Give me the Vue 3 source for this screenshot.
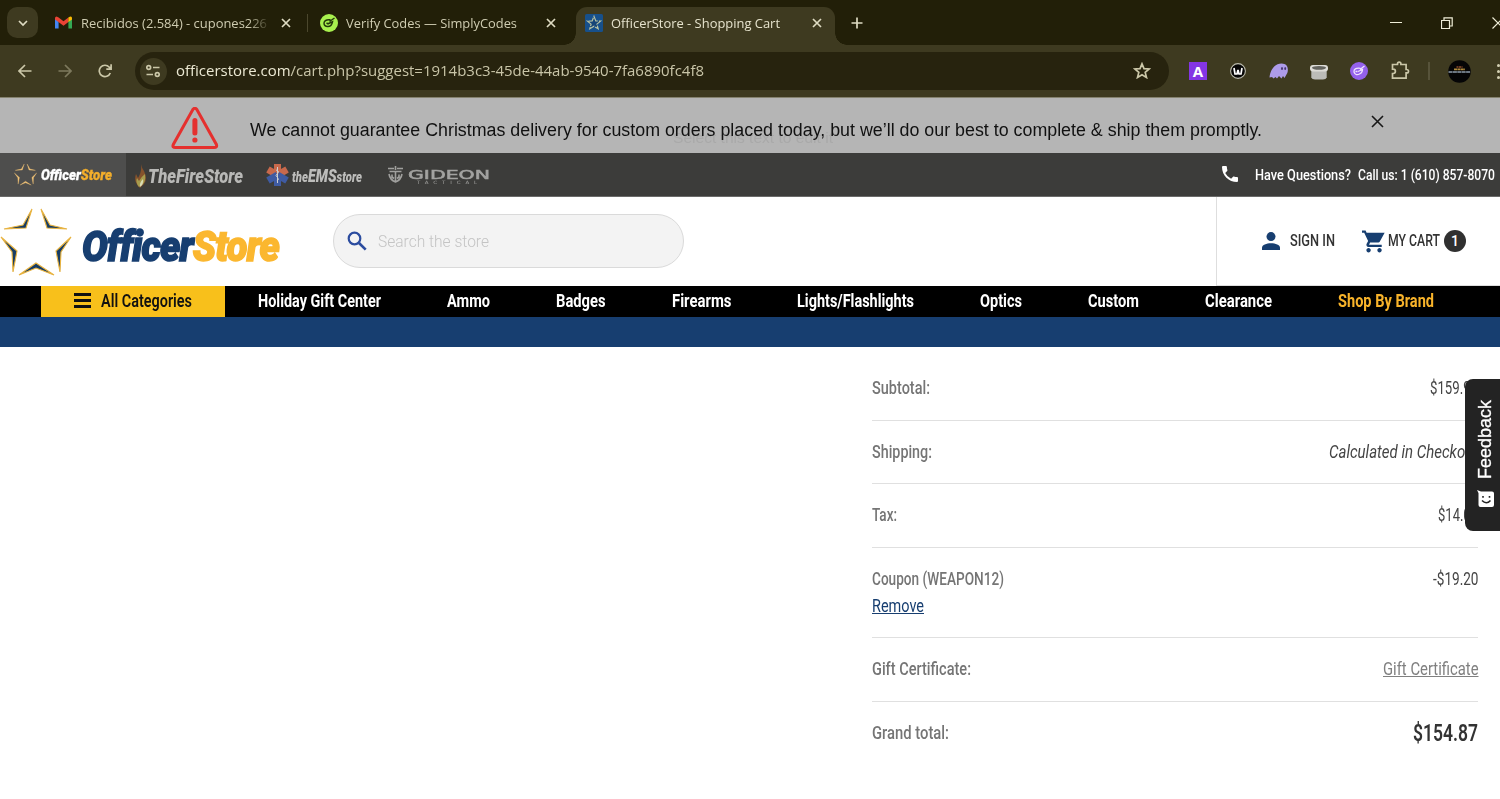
<template>
  <div class="window">
    <div class="tabstrip">
      <div class="tab-search">
        <svg width="12" height="12" viewBox="0 0 12 12"><path d="M2 4l4 4 4-4" class="line bright" /></svg>
      </div>
      <div class="tab tab-mail">
        <svg class="fav" width="17" height="14" viewBox="0 0 17 14">
          <path d="M0 2v10.500h3.600V5z" fill="#4285f4" />
          <path d="M17 2v10.500h-3.600V5z" fill="#34a853" />
          <path d="M0 2.200Q0 .6 1.600.6L3.600 1.500 8.500 5.300 13.400 1.500V6L8.500 9.800 0 3.500z" fill="#ea4335" />
          <path d="M13.400 1.500Q17-.8 17 2.300V3.500L13.400 6z" fill="#fbbc04" />
        </svg>
        <span class="tab-title fade" v-fit="186">Recibidos (2.584) - cupones226</span>
        <svg class="x" width="10" height="10" viewBox="0 0 10 10"><path d="M1 1l8 8M9 1l-8 8" class="line bright" /></svg>
      </div>
      <div class="tab-divider"></div>
      <div class="tab tab-codes">
        <svg class="fav" width="18" height="18" viewBox="0 0 18 18">
          <circle cx="9" cy="9" r="9" fill="#a8f04e" />
          <path d="M10.500 5.800Q4.500 5.200 4 9q0 3.600 4 3.400 3.600 0 4.500-4.600L8 9.800l-1.500-1M9.500 7.500l5-3.500" fill="none" stroke="#24380b" stroke-width="1.500" />
        </svg>
        <span class="tab-title" v-fit="171">Verify Codes — SimplyCodes</span>
        <svg class="x" width="10" height="10" viewBox="0 0 10 10"><path d="M1 1l8 8M9 1l-8 8" class="line bright" /></svg>
      </div>
      <div class="tab tab-active">
        <svg class="fav" width="18" height="18" viewBox="0 0 18 18">
          <rect width="18" height="18" rx="1.500" fill="#17508b" />
          <path d="M9 2.300l1.800 4.600 4.800.2-3.700 3 1.300 4.700L9 12.200l-4.200 2.600 1.300-4.700-3.700-3 4.800-.2z" fill="#164578" stroke="#b9c3a3" stroke-width="1.200" stroke-dasharray="7 1" />
        </svg>
        <span class="tab-title" v-fit="169">OfficerStore - Shopping Cart</span>
        <svg class="x" width="10" height="10" viewBox="0 0 10 10"><path d="M1 1l8 8M9 1l-8 8" class="line bright" /></svg>
      </div>
      <svg class="new-tab" width="12" height="12" viewBox="0 0 12 12"><path d="M6 .5v11M.5 6h11" class="line bright" /></svg>
      <div class="controls">
        <svg width="12" height="12" viewBox="0 0 12 12"><path d="M0 5.500h12" stroke="#f0eed8" /></svg>
        <svg width="12" height="12" viewBox="0 0 12 12"><path d="M.5 3.500h8v8h-8zM3 3V.8h8.200V9H9" fill="none" stroke="#f0eed8" stroke-width="1.200" /></svg>
        <svg width="12" height="12" viewBox="0 0 12 12"><path d="M.5.5l11 11M11.500.5l-11 11" fill="none" stroke="#f0eed8" stroke-width="1.200" /></svg>
      </div>
    </div>

    <div class="toolbar">
      <svg class="back" width="14" height="14" viewBox="0 0 14 14"><path d="M13.500 7H1.500M7 1L1 7l6 6" class="line" /></svg>
      <svg class="forward" width="14" height="14" viewBox="0 0 14 14"><path d="M.5 7h12M7 1l6 6-6 6" class="line" /></svg>
      <svg class="reload" width="14" height="14" viewBox="0 0 14 14"><path d="M12.300 9A5.700 5.700 0 1 1 11.300 3.200L13 5M13.100.3V5.200H8.300" class="line" /></svg>
      <div class="omnibox">
        <div class="site-info">
          <svg width="14" height="14" viewBox="0 0 14 14">
            <circle cx="2.700" cy="3.500" r="1.900" class="line" /><path d="M7 3.500h6.500M.5 10.500H7" class="line" /><circle cx="11.300" cy="10.500" r="1.900" class="line" />
          </svg>
        </div>
        <span class="url" v-fit="528"><b>officerstore.com</b>/cart.php?suggest=1914b3c3-45de-44ab-9540-7fa6890fc4f8</span>
        <svg class="bookmark" width="18" height="17" viewBox="0 0 18 17"><path d="M9 1.800l2 4.800 5.200.4-4 3.400 1.300 5.100L9 12.800l-4.500 2.700 1.300-5.100-4-3.400L7 6.600z" class="line" /></svg>
      </div>
      <div class="extensions">
        <div class="ext-a">A</div>
        <div class="ext-w">
          <svg width="16" height="16" viewBox="0 0 16 16"><circle cx="8" cy="8" r="7.400" fill="#050505" stroke="#bcbcae" stroke-width="1.100" /><path d="M4 5l1 6h2l1-4 1 4h2l1-6" fill="none" stroke="#fff" stroke-width="1.700" /></svg>
        </div>
        <svg width="20" height="16" viewBox="0 0 20 16"><path d="M.5 14.500C1 7 6 .5 12.500.5c6 0 7.300 5 5.800 9.500L15.500 15l-1.500-2-1.500 2.500L10 13l-2 2.500L6.500 14l-2 1.500L3 14z" fill="#ad9be9" /><ellipse cx="13" cy="5.500" rx="1" ry="1.500" fill="#46366c" /><ellipse cx="16.200" cy="5.500" rx=".9" ry="1.500" fill="#46366c" /></svg>
        <svg class="cup" width="18" height="16" viewBox="0 0 18 16"><path d="M1.300 6v7.500q.7 2 3.700 2h8q3 0 3.700-2V6z" fill="#bcbcb8" /><rect y="1" width="18" height="6.500" rx="3" fill="#dddcd7" /><ellipse cx="9" cy="3.800" rx="7" ry="1.900" fill="#64645f" /></svg>
        <svg width="18" height="18" viewBox="0 0 18 18"><circle cx="9" cy="9" r="9" fill="#9461ec" /><path d="M10.500 6.300Q3.500 5.500 4 10q1.500 4 5.500 2 3-1.500 3-4.500L8 9.500M10 7.500L14.500 4M5.500 9.500h2" fill="none" stroke="#efe3ff" stroke-width="1.300" /></svg>
        <svg class="puzzle" width="19" height="19" viewBox="0 0 19 19"><path d="M1.500 3.500h5V2.800a1.700 1.700 0 0 1 3.400 0v.7h5.200v5h.7a1.700 1.700 0 0 1 0 3.400h-.7v5.200H1.500v-4.600h.7a2.200 2.200 0 0 0 0-4.400h-.7z" class="line" /></svg>
        <div class="ext-divider"></div>
        <svg class="profile" width="23" height="23" viewBox="0 0 23 23"><circle cx="11.500" cy="11.500" r="11.300" fill="#050506" /><path d="M8.500 7h6" stroke="#8d4b2c" stroke-width="1.300" stroke-dasharray="2 .5" /><path d="M6 9.300h11" stroke="#b08a3c" stroke-width="1.700" stroke-dasharray="3 .4" /><path d="M.5 11.900h22" stroke="#8e9dad" stroke-width="1.500" stroke-dasharray="4 .4" /></svg>
        <div class="dots"><i></i><i></i><i></i></div>
      </div>
    </div>

    <div class="notice">
      <svg class="warning" width="48" height="43" viewBox="0 0 48 43">
        <path d="M21.700 2.700Q23.900-.3 26 2.700L45.400 37.500Q46.500 40.500 43 40.500H4.500Q1 40.500 2.300 37.500z" fill="none" stroke="#e5302e" stroke-width="3" />
        <path d="M23.900 13.500v12.500" stroke="#e5302e" stroke-width="5" stroke-linecap="round" /><circle cx="23.900" cy="33" r="2.600" fill="#e5302e" />
      </svg>
      <span class="placeholder-copy" v-fit="160">Select this text to edit it</span>
      <span class="notice-text" v-fit="1012">We cannot guarantee Christmas delivery for custom orders placed today, but we’ll do our best to complete &amp; ship them promptly.</span>
      <svg class="notice-close" width="13" height="13" viewBox="0 0 13 13"><path d="M1 1l11 11M12 1L1 12" fill="none" stroke="#171717" stroke-width="1.600" /></svg>
    </div>

    <div class="stores">
      <div class="store store-officer">
        <svg width="23" height="23" viewBox="0 0 72 68"><path v-for="d in starPoints" :key="d" :d="d" fill="#f2c477" stroke="#f2c477" /></svg>
        <span v-fit="71">Officer<em>Store</em></span>
      </div>
      <div class="store store-fire">
        <svg width="12" height="24" viewBox="0 0 12 24"><path d="M6 0q1 5 3 7 4 8 0 13l-4 4Q-2 18 1 10l2 4Q7 8 6 0" fill="#85522c" /><path d="M4 23Q0 18 2 14l2 3q2-4 6-7 1 8-3 11z" fill="#a79c4d" /><path d="M5 23q-1-4 3-8 1 5-3 8" fill="#d9dcb4" /></svg>
        <span v-fit="95">TheFireStore</span>
      </div>
      <div class="store store-ems">
        <svg width="23" height="24" viewBox="0 0 23 24">
          <g fill="#c8694c">
            <rect x="8" y="1" width="7" height="11" />
            <rect x="8" y="1" width="7" height="11" transform="rotate(-60 11.500 12)" />
            <rect x="8" y="1" width="7" height="11" transform="rotate(60 11.500 12)" />
          </g>
          <g fill="#3f5ba2">
            <rect x="8" y="12" width="7" height="11" />
            <rect x="8" y="12" width="7" height="11" transform="rotate(-60 11.500 12)" />
            <rect x="8" y="12" width="7" height="11" transform="rotate(60 11.500 12)" />
          </g>
          <path d="M11.500 4v16M10 7q4 1 1.500 3.500-3 2 0 4 2 2-.5 3.500" fill="none" stroke="#cfcfcf" />
        </svg>
        <span v-fit="70"><small>the</small>EMS<small>store</small></span>
      </div>
      <div class="store-gideon">
        <svg width="17" height="17" viewBox="0 0 17 17"><path d="M1 2.500h6M10 2.500h6M2.500 5.500h12M2 8q1 6 6.500 8Q14 14 15 8M8.500 6v9M5 8.500v2.500l2 1.500M12 8.500v2.500l-2 1.500M8.500 0v4" fill="none" stroke="#a0a09e" stroke-width="1.600" /></svg>
        <div class="gideon-name"><span v-fit="82">GIDEON</span><small v-fit="65">TACTICAL</small></div>
      </div>
      <div class="phone">
        <svg width="16" height="16" viewBox="3 3 18 18"><path d="M6.620 10.790a15.150 15.150 0 0 0 6.590 6.590l2.200-2.200c.27-.27.67-.36 1.020-.24 1.120.37 2.330.57 3.570.57.55 0 1 .45 1 1V20c0 .55-.45 1-1 1C10.610 21 3 13.390 3 4c0-.55.45-1 1-1h3.500c.55 0 1 .45 1 1 0 1.250.2 2.450.57 3.570.11.35.03.74-.25 1.020z" fill="#fff" /></svg>
        <span v-fit="96">Have Questions?</span>
        <span v-fit="137">Call us: 1 (610) 857-8070</span>
      </div>
    </div>

    <header class="header">
      <div class="logo">
        <svg width="72" height="68" viewBox="0 0 72 68">
          <path v-for="d in starPoints" :key="d" :d="d" fill="#173c64" stroke="#eab43f" stroke-width="1.100" />
        </svg>
        <span v-fit="197">Officer<em>Store</em></span>
      </div>
      <div class="search">
        <svg width="20" height="20" viewBox="0 0 20 20"><circle cx="7.500" cy="7.500" r="5.800" fill="none" stroke="#2b4c9f" stroke-width="2.200" /><path d="M12 12l6.700 6.700" stroke="#2b4c9f" stroke-width="2.600" /></svg>
        <span v-fit="111">Search the store</span>
      </div>
      <div class="account">
        <svg class="user" width="18" height="18" viewBox="0 0 18 18"><circle cx="9" cy="4.600" r="4.500" fill="#173e70" /><path d="M0 18v-2.200C0 9.600 18 9.600 18 15.800V18z" fill="#173e70" /></svg>
        <span class="sign-in" v-fit="45">SIGN IN</span>
        <svg class="cart" width="23" height="23" viewBox="1 1.500 21 21"><path d="M7 18c-1.100 0-1.990.9-1.990 2S5.900 22 7 22s2-.9 2-2-.9-2-2-2zM1 2v2h2l3.600 7.590-1.350 2.450C4.520 15.370 5.480 17 7 17h12v-2H7.420l.98-2h7.150c.75 0 1.410-.41 1.750-1.030L21.700 4H5.210l-.94-2zm16 16c-1.100 0-1.990.9-1.990 2s.89 2 1.990 2 2-.9 2-2-.9-2-2-2z" fill="#173e70" /></svg>
        <span class="my-cart" v-fit="52">MY CART</span>
        <span class="count">1</span>
      </div>
    </header>

    <nav class="nav">
      <div class="all">
        <div class="burger"><i></i><i></i><i></i></div>
        <span v-fit="91">All Categories</span>
      </div>
      <span
        v-for="item in menu"
        :key="item.label"
        v-fit="item.width"
        :class="{ brand: item.brand }"
      >{{ item.label }}</span>
    </nav>
    <div class="blue-band"></div>

    <main class="totals">
      <div v-for="row in rows" :key="row.label" class="row" :class="row.kind">
        <div class="label">
          <span v-fit="row.labelWidth">{{ row.label }}</span>
          <a v-if="row.kind === 'coupon'" v-fit="52">Remove</a>
        </div>
        <span class="value" v-fit="row.valueWidth">{{ row.value }}</span>
      </div>
    </main>

    <div class="feedback">
      <span>Feedback</span>
      <svg width="17" height="17" viewBox="0 0 17 17"><path d="M0 0l4 1.500h11q2 0 2 2V15q0 2-2 2H3.500q-2 0-2-2V3z" fill="#fff" /><path d="M6 6v1.800M12.500 6v1.800M5 10.500q4.300 4.500 8.500 0" fill="none" stroke="#232323" stroke-width="1.600" /></svg>
    </div>
  </div>
</template>

<script setup>
// squeezes or stretches a piece of text to a set width in px
function fit(el, binding) {
  el.style.transform = "none";
  el.style.marginRight = "0";
  const natural = el.getBoundingClientRect().width;
  el.style.transform = "scaleX(" + binding.value / natural + ")";
  el.style.marginRight = binding.value - natural + "px";
}
const vFit = { mounted: fit };

const starPoints = [
  "M32 1L26 20 4 21 23 17z",
  "M41 1L47 20 67 21 50 17z",
  "M1 29L17 43 13 64 12 44z",
  "M71 29L56 43 60 64 61 44z",
  "M36 55L54 67 36 60 19 67z",
];

const menu = [
  { label: "Holiday Gift Center", width: 123 },
  { label: "Ammo", width: 43 },
  { label: "Badges", width: 49.5 },
  { label: "Firearms", width: 59.5 },
  { label: "Lights/Flashlights", width: 117 },
  { label: "Optics", width: 42 },
  { label: "Custom", width: 51 },
  { label: "Clearance", width: 67 },
  { label: "Shop By Brand", width: 96, brand: true },
];

const rows = [
  { label: "Subtotal:", labelWidth: 58, value: "$159.99", valueWidth: 48 },
  { label: "Shipping:", labelWidth: 60, value: "Calculated in Checkout", valueWidth: 149, kind: "shipping" },
  { label: "Tax:", labelWidth: 25, value: "$14.08", valueWidth: 40 },
  { label: "Coupon (WEAPON12)", labelWidth: 132, value: "-$19.20", valueWidth: 45.5, kind: "coupon" },
  { label: "Gift Certificate:", labelWidth: 99, value: "Gift Certificate", valueWidth: 95.5, kind: "gift" },
  { label: "Grand total:", labelWidth: 77, value: "$154.87", valueWidth: 65, kind: "grand" },
];
</script>

<style>
body {
  margin: 0;
  background: #fff;
}
</style>

<style scoped>
.window {
  position: relative;
  width: 1500px;
  height: 799px;
  overflow: hidden;
  background: #fff;
  font-family: Roboto, sans-serif;
}
svg {
  display: block;
  flex: none;
}
span,
small,
a {
  display: inline-block;
  flex: none;
  white-space: nowrap;
  transform-origin: left center;
}
.line {
  fill: none;
  stroke: #cbc7a8;
  stroke-width: 1.7;
}
.line.bright {
  stroke: #dedbc2;
}

/* browser tabs */
.tabstrip {
  display: flex;
  height: 45px;
  background: #221f08;
  font-family: "Open Sans", "Noto Sans", sans-serif;
}
.tab-search {
  display: flex;
  align-items: center;
  justify-content: center;
  width: 31px;
  height: 31px;
  margin: 7px 0 0 7px;
  border-radius: 10px;
  background: #3e3a20;
}
.tab {
  display: flex;
  align-items: center;
  box-sizing: border-box;
  height: 46px;
  flex: none;
}
.tab-title {
  font-size: 13.5px;
  color: #cfccb1;
}
.fade {
  mask-image: linear-gradient(to right, #000 90%, transparent 102%);
}
.tab-mail {
  width: 269px;
  padding-left: 17px;
}
.tab-mail .fav {
  margin-right: 9px;
}
.tab-mail .x {
  margin-left: 14px;
}
.tab-divider {
  width: 1px;
  height: 18px;
  margin-top: 14px;
  background: #4b472d;
}
.tab-codes {
  width: 268px;
  padding-left: 12px;
}
.tab-codes .fav,
.tab-active .fav {
  margin-right: 8px;
}
.tab-codes .x {
  margin-left: 29px;
}
.tab-active {
  position: relative;
  width: 259px;
  height: 38px;
  margin-top: 7px;
  padding: 0 0 7px 9px;
  border-radius: 11px 11px 0 0;
  background: #3e3a20;
}
.tab-active::before,
.tab-active::after {
  content: "";
  position: absolute;
  bottom: 0;
  width: 12px;
  height: 12px;
}
.tab-active::before {
  left: -12px;
  background: radial-gradient(circle at 0 0, transparent 11.5px, #3e3a20 12px);
}
.tab-active::after {
  right: -12px;
  background: radial-gradient(circle at 100% 0, transparent 11.5px, #3e3a20 12px);
}
.tab-active .tab-title {
  color: #e6e3cd;
}
.tab-active .x {
  margin-left: 32px;
}
.new-tab {
  margin: 17px 0 0 16px;
}
.controls {
  display: flex;
  gap: 39px;
  margin: 17px -4px 0 auto;
}

/* address bar */
.toolbar {
  display: flex;
  align-items: center;
  box-sizing: border-box;
  height: 53px;
  border-bottom: 1px solid #85826f;
  background: #3e3a20;
  font-family: "Open Sans", "Noto Sans", sans-serif;
}
.back {
  margin-left: 18px;
}
.forward {
  margin-left: 26px;
  opacity: 0.45;
}
.reload {
  margin-left: 26px;
}
.omnibox {
  display: flex;
  align-items: center;
  flex: none;
  width: 1034px;
  height: 38px;
  margin-left: 23px;
  border-radius: 19px;
  background: #27230e;
}
.site-info {
  display: flex;
  align-items: center;
  justify-content: center;
  width: 27px;
  height: 27px;
  margin: 0 9px 0 5px;
  border-radius: 50%;
  background: #3e3a20;
}
.site-info svg {
  margin-right: 1px;
}
.url {
  margin-bottom: 2px;
  font-size: 15px;
  color: #c9c5a8;
}
.url b {
  font-weight: 400;
  color: #ebe8d2;
}
.bookmark {
  margin-left: auto;
  margin-right: 18px;
  margin-bottom: 1px;
}
.extensions {
  display: flex;
  align-items: center;
  flex: none;
  margin-left: 20px;
}
.ext-a {
  width: 18px;
  height: 18px;
  background: #8435e4;
  color: #fff;
  font-weight: 700;
  font-size: 15px;
  line-height: 18px;
  text-align: center;
}
.ext-w {
  margin: 0 23px 0 23px;
}
.cup {
  margin: 2px 22px 0 21px;
}
.puzzle {
  margin: -2px 0 0 23px;
}
.ext-divider {
  width: 2px;
  height: 18px;
  margin: 0 18px 0 18px;
  background: #57533a;
}
.dots {
  display: flex;
  flex-direction: column;
  gap: 3px;
  margin-left: 26px;
}
.dots i {
  width: 3px;
  height: 3px;
  border-radius: 50%;
  background: #d5d1b4;
}

/* delivery notice */
.notice {
  position: relative;
  display: flex;
  height: 55px;
  background: #b5b5b5;
  font-family: "Liberation Sans", Arial, sans-serif;
}
.warning {
  margin: 9px 0 0 171px;
}
.notice-text {
  position: relative;
  margin: 22px 0 0 31px;
  font-size: 18px;
  line-height: 21px;
  color: #111;
}
.placeholder-copy {
  position: absolute;
  left: 673px;
  top: 31px;
  font-size: 15px;
  color: #a9a9a9;
}
.notice-close {
  margin: 17px 0 0 109px;
}

/* sister stores */
.stores {
  display: flex;
  height: 44px;
  background: linear-gradient(#3c3c3a 43px, #6a6a69 43px);
  color: #fff;
}
.store {
  display: flex;
  align-items: center;
  box-sizing: border-box;
  height: 43px;
  font-family: Roboto, sans-serif;
  font-weight: 900;
  font-style: italic;
}
.store-officer {
  width: 126px;
  padding-left: 14px;
  background: #4e4e4d;
  font-size: 15.5px;
}
.store-officer span {
  margin-left: 4px;
  -webkit-text-stroke: 0.3px;
}
.store-officer em {
  color: #f3ae2b;
}
.store-fire {
  padding: 3px 0 0 9px;
  color: #b8b8b6;
  font-size: 20px;
}
.store-fire span {
  margin-left: 1px;
}
.store-ems {
  padding: 1px 0 0 23px;
  color: #bdbdbb;
  font-size: 19px;
}
.store-ems span {
  margin-left: 3px;
}
.store-ems small {
  font-size: 15px;
}
.store-gideon {
  display: flex;
  align-items: center;
  height: 42px;
  margin-left: 25px;
  color: #a3a3a1;
}
.gideon-name {
  display: flex;
  flex-direction: column;
  align-items: flex-start;
  margin: 6px 0 0 4px;
  width: 84px;
}
.gideon-name span {
  font: 400 11.5px/11px "DejaVu Sans", sans-serif;
  -webkit-text-stroke: 0.5px;
}
.gideon-name small {
  margin-left: 9px;
  font: 400 4.5px/4px "DejaVu Sans", sans-serif;
  letter-spacing: 4px;
}
.phone {
  display: flex;
  align-items: center;
  height: 43px;
  margin-left: auto;
  margin-right: 5px;
  font-size: 15px;
  font-weight: 500;
}
.phone svg {
  margin: 0 17px 2px 0;
}
.phone span + span {
  margin-left: 7px;
}

/* store header */
.header {
  display: flex;
  height: 89px;
}
.logo {
  display: flex;
  width: 333px;
}
.logo svg {
  margin-top: 11px;
}
.logo span {
  margin: 22px 0 0 10px;
  font: italic 900 43px/54px Roboto, sans-serif;
  letter-spacing: -1px;
  color: #173e70;
  -webkit-text-stroke: 1.5px;
}
.logo em {
  color: #fbb72f;
}
.search {
  display: flex;
  align-items: center;
  box-sizing: border-box;
  width: 351px;
  height: 54px;
  margin-top: 17px;
  padding: 0 0 1px 13px;
  border: 1px solid #dadada;
  border-radius: 27px;
  background: #f3f3f3;
  font-size: 17px;
  font-weight: 300;
  color: #c4c4c4;
}
.search span {
  margin-left: 11px;
}
.account {
  display: flex;
  align-items: center;
  box-sizing: border-box;
  width: 284px;
  margin-left: auto;
  padding-left: 45px;
  border-left: 1px solid #dedede;
  border-bottom: 1px solid #dedede;
  font-size: 17px;
  font-weight: 500;
  color: #333;
}
.sign-in {
  margin: -2px 0 0 10px;
}
.cart {
  margin-left: 27px;
}
.my-cart {
  margin: -2px 0 0 3px;
}
.count {
  width: 22px;
  height: 22px;
  margin-left: 4px;
  border-radius: 50%;
  background: #303030;
  color: #fff;
  font-size: 14px;
  line-height: 22px;
  text-align: center;
}

/* category menu */
.nav {
  display: flex;
  align-items: center;
  gap: 66px;
  height: 31px;
  padding-left: 41px;
  background: #000;
  color: #fff;
  font-size: 17.5px;
  font-weight: 700;
}
.nav span {
  margin-bottom: 2px;
}
.all {
  display: flex;
  align-items: center;
  box-sizing: border-box;
  width: 184px;
  height: 31px;
  padding-left: 33px;
  margin-right: -33px;
  background: #f8c01b;
  color: #111;
  font-weight: 600;
}
.burger {
  display: flex;
  flex-direction: column;
  gap: 3px;
  width: 17px;
  margin: 0 10px 3px 0;
}
.burger i {
  height: 3px;
  background: #111;
}
.brand {
  color: #f8b32a;
}
.blue-band {
  height: 30px;
  background: #173e70;
}

/* cart totals */
.totals {
  width: 606px;
  margin: 10px 22px 0 auto;
  color: #757575;
  font-size: 17.5px;
}
.row {
  display: flex;
  align-items: flex-start;
  justify-content: space-between;
  box-sizing: border-box;
  height: 63.6px;
  padding-top: 18px;
  border-bottom: 1px solid #e0e0e0;
  line-height: 27px;
}
.label {
  display: flex;
  flex-direction: column;
  align-items: flex-start;
  font-weight: 500;
}
.label a {
  color: #173e70;
  font-weight: 400;
  text-decoration: underline;
}
.value {
  color: #444;
}
.shipping .value {
  font-style: italic;
}
.coupon {
  height: 90.5px;
}
.gift .value {
  color: #808080;
  text-decoration: underline;
}
.grand {
  border-bottom: 0;
}
.grand .value {
  color: #333;
  font-size: 24px;
  font-weight: 600;
}

.feedback {
  position: absolute;
  right: 0;
  top: 379px;
  display: flex;
  flex-direction: column;
  align-items: center;
  box-sizing: border-box;
  width: 35px;
  height: 152px;
  padding: 21px 0 0 6px;
  border-radius: 8px 0 0 8px;
  background: #232323;
}
.feedback span {
  writing-mode: vertical-rl;
  transform: rotate(180deg);
  transform-origin: center;
  margin-right: 2px;
  font: 18px/22px "Liberation Sans", Arial, sans-serif;
  color: #fff;
  -webkit-text-stroke: 0.3px;
}
.feedback svg {
  margin: 11px 0 0;
}
</style>
